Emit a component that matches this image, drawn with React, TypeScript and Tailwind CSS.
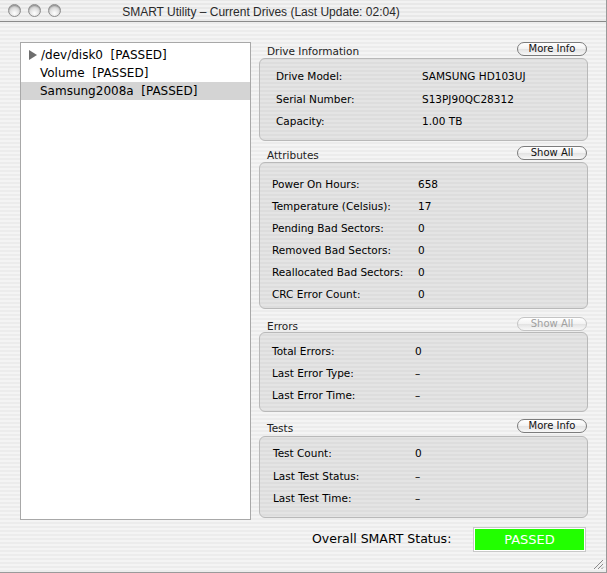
import React from "react";

type Row = { label: string; value: string };

const driveInfo: Row[] = [
  { label: "Drive Model:", value: "SAMSUNG HD103UJ" },
  { label: "Serial Number:", value: "S13PJ90QC28312" },
  { label: "Capacity:", value: "1.00 TB" },
];

const attributes: Row[] = [
  { label: "Power On Hours:", value: "658" },
  { label: "Temperature (Celsius):", value: "17" },
  { label: "Pending Bad Sectors:", value: "0" },
  { label: "Removed Bad Sectors:", value: "0" },
  { label: "Reallocated Bad Sectors:", value: "0" },
  { label: "CRC Error Count:", value: "0" },
];

const errors: Row[] = [
  { label: "Total Errors:", value: "0" },
  { label: "Last Error Type:", value: "–" },
  { label: "Last Error Time:", value: "–" },
];

const tests: Row[] = [
  { label: "Test Count:", value: "0" },
  { label: "Last Test Status:", value: "–" },
  { label: "Last Test Time:", value: "–" },
];

const font = "font-['Lucida_Grande','DejaVu_Sans',sans-serif]";

const PillButton = ({ label, disabled }: { label: string; disabled?: boolean }) => (
  <button
    className={`h-[14px] w-[70px] rounded-full border text-[10px] leading-[12px] bg-[linear-gradient(#ffffff,#f2f2f2_50%,#e2e2e2_50%,#f8f8f8)] ${
      disabled ? "border-[#c4c4c4] text-[#a0a0a0]" : "border-[#7c7c7c] text-[#111]"
    }`}
  >
    {label}
  </button>
);

const Group = ({
  title,
  button,
  disabled,
  rows,
  className,
  boxClass,
}: {
  title: string;
  button: string;
  disabled?: boolean;
  rows: Row[];
  className: string;
  boxClass: string;
}) => (
  <div className={className}>
    <div className="flex h-[14px] items-start justify-between pr-px">
      <span className="pl-[8px] pt-[2px] text-[10.5px] leading-[14px] text-[#222]">{title}</span>
      <PillButton label={button} disabled={disabled} />
    </div>
    <div
      className={`rounded-[6px] border border-[#b9b9b9] bg-[#00000010] text-[10.5px] text-black ${boxClass}`}
    >
      {rows.map((r) => (
        <div key={r.label} className="flex h-[22px] items-center">
          <span className="w-[146px] shrink-0">{r.label}</span>
          <span>{r.value}</span>
        </div>
      ))}
    </div>
  </div>
);

const TrafficLight = () => (
  <div className="h-[13px] w-[13px] rounded-full border border-[#8d8d8d] bg-[radial-gradient(circle_at_50%_75%,#ffffff_0%,#e2e2e2_45%,#a9a9a9_100%)] shadow-[inset_0_1px_1px_rgba(0,0,0,0.25)]" />
);

export default function App() {
  return (
    <div
      className={`${font} relative h-[573px] w-[607px] overflow-hidden border-r border-b border-[#9a9a9a] bg-[image:repeating-linear-gradient(0deg,#ececec_0px,#ececec_2px,#f4f4f4_2px,#f4f4f4_4px)]`}
    >
      {/* title bar */}
      <div className="relative flex h-[22px] items-center border-b border-[#8a8a8a] bg-[image:repeating-linear-gradient(0deg,#e8e8e8_0px,#e8e8e8_2px,#f2f2f2_2px,#f2f2f2_4px)]">
        <div className="flex gap-[7px] pl-[8px]">
          <TrafficLight />
          <TrafficLight />
          <TrafficLight />
        </div>
        <div className="absolute inset-x-0 top-[1px] flex h-[21px] items-center justify-center pr-[84px] font-['Liberation_Sans',sans-serif] text-[12px] text-[#2a2a2a]">
          SMART Utility – Current Drives (Last Update: 02:04)
        </div>
      </div>

      <div className="flex pt-[20px]">
        {/* drive list */}
        <div className="ml-[20px] h-[478px] w-[231px] border border-[#a8a8a8] bg-white pt-[3px] text-[12px] text-black">
          <div className="flex h-[18px] items-center">
            <svg className="ml-[8px] mr-[4px]" width="8" height="10" viewBox="0 0 8 10">
              <path d="M0 0 L8 5 L0 10 Z" fill="#6e6e6e" />
            </svg>
            <span className="whitespace-pre">/dev/disk0  [PASSED]</span>
          </div>
          <div className="flex h-[18px] items-center pl-[19px]">
            <span className="whitespace-pre">Volume  [PASSED]</span>
          </div>
          <div className="flex h-[18px] items-center bg-[#d4d4d4] pl-[19px]">
            <span className="whitespace-pre">Samsung2008a  [PASSED]</span>
          </div>
        </div>

        {/* detail column */}
        <div className="ml-[8px] w-[329px]">
          <Group
            title="Drive Information"
            button="More Info"
            rows={driveInfo}
            className=""
            boxClass="mt-[2px] h-[83px] pl-[16px] pt-[7px] [&>div]:h-[22.5px]"
          />
          <Group
            title="Attributes"
            button="Show All"
            rows={attributes}
            className="mt-[5px]"
            boxClass="mt-[2px] h-[147px] pl-[12px] pt-[11px]"
          />
          <Group
            title="Errors"
            button="Show All"
            disabled
            rows={errors}
            className="mt-[8px]"
            boxClass="mt-[1px] h-[80px] pl-[12px] pt-[8px] [&>div>span:first-child]:w-[143px]"
          />
          <Group
            title="Tests"
            button="More Info"
            rows={tests}
            className="mt-[7px]"
            boxClass="mt-[3px] h-[82px] pl-[13px] pt-[6px] [&>div]:h-[22.5px] [&>div>span:first-child]:w-[142px]"
          />

          <div className="mt-[9px] flex h-[25px] items-center">
            <span className="ml-[53px] text-[12.5px] text-black">Overall SMART Status:</span>
            <div className="ml-auto mr-[2px] flex h-[25px] w-[113px] items-center justify-center border border-[#c8c8c8] bg-[#ffffff] p-px">
              <div className="flex h-full w-full items-center justify-center bg-[#22ff00] text-[13px] text-white">
                PASSED
              </div>
            </div>
          </div>
        </div>
      </div>

      {/* resize grip */}
      <svg className="absolute bottom-[2px] right-[2px]" width="11" height="11" viewBox="0 0 11 11">
        <path d="M1 10 L10 1 M5 10 L10 5 M8.5 10 L10 8.5" stroke="#8a8a8a" strokeWidth="1" />
      </svg>
    </div>
  );
}
